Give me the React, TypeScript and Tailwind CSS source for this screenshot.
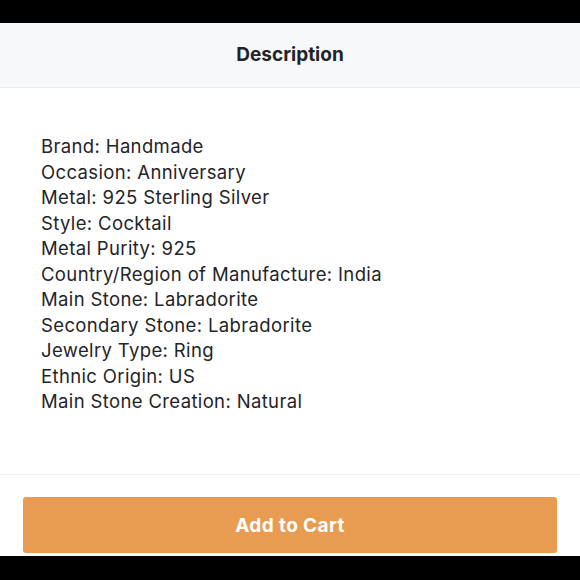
const specs = [
  "Brand: Handmade",
  "Occasion: Anniversary",
  "Metal: 925 Sterling Silver",
  "Style: Cocktail",
  "Metal Purity: 925",
  "Country/Region of Manufacture: India",
  "Main Stone: Labradorite",
  "Secondary Stone: Labradorite",
  "Jewelry Type: Ring",
  "Ethnic Origin: US",
  "Main Stone Creation: Natural",
];

export default function App() {
  return (
    <div className="flex h-[580px] w-[580px] flex-col bg-black font-['Inter',sans-serif]">
      <div className="h-[23px] shrink-0" />
      <div className="flex h-[65px] shrink-0 items-center justify-center border-b border-[#ececee] bg-[#f7f8fa]">
        <span className="text-[19px] font-bold text-[#1f2429]">Description</span>
      </div>
      <div className="flex-1 bg-white">
        <div className="h-[387px] border-b border-[#efeff1] px-[41px] pt-[46px] text-[18.5px] leading-[25.5px] tracking-[0.36px] text-[#1f2429]">
          {specs.map((s) => (
            <div key={s}>{s}</div>
          ))}
        </div>
        <div className="px-[23px] pt-[22px]">
          <button className="flex h-[56px] w-full items-center justify-center rounded-[3px] bg-[#e89c52] pt-[2px] text-[19px] font-bold tracking-[0.4px] text-white">
            Add to Cart
          </button>
        </div>
      </div>
      <div className="h-[24px] shrink-0" />
    </div>
  );
}
